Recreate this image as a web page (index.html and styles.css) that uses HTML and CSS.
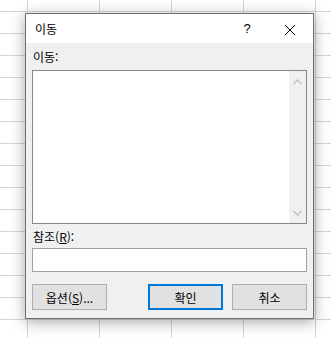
FILE: index.html
```html
<!DOCTYPE html>
<html lang="ko">
  <head>
    <meta charset="UTF-8" />
    <title>이동</title>
    <link rel="stylesheet" href="styles.css">
  </head>
  <body>
    <div class="dialog">
      <div class="titlebar">
        <span class="title">이동</span>
        <span class="help">?</span>
        <span class="close">
          <svg width="12" height="12" viewBox="0 0 12 12"><path d="M1 1 L11 11 M11 1 L1 11" stroke="#000" stroke-width="1" fill="none"/></svg>
        </span>
      </div>
      <div class="body">
        <div class="label">이동:</div>
        <div class="listbox">
          <div class="list-area"></div>
          <div class="scrollbar">
            <svg width="9" height="6" viewBox="0 0 9 6"><path d="M0.5 5 L4.5 1 L8.5 5" stroke="#c2c2c2" stroke-width="1.5" fill="none"/></svg>
            <svg width="9" height="6" viewBox="0 0 9 6"><path d="M0.5 1 L4.5 5 L8.5 1" stroke="#c2c2c2" stroke-width="1.5" fill="none"/></svg>
          </div>
        </div>
        <div class="label ref">참조(<u>R</u>):</div>
        <div class="textbox"></div>
        <div class="buttons">
          <button class="btn">옵션(<u>S</u>)...</button>
          <span class="spacer"></span>
          <button class="btn default">확인</button>
          <button class="btn">취소</button>
        </div>
      </div>
    </div>
  </body>
</html>
```
FILE: styles.css
```css
body {
  margin: 0;
  width: 331px;
  height: 338px;
  overflow: hidden;
  font-family: "Noto Sans CJK KR", "Noto Sans", sans-serif;
  font-size: 12px;
  color: #000;
  background-color: #fff;
  background-image:
    linear-gradient(to right, #d4d4d4 1px, transparent 1px),
    linear-gradient(to bottom, #d4d4d4 1px, transparent 1px);
  background-size: 72px 22px;
  background-position: 27px 11px;
  padding: 13px 0 0 25px;
  box-sizing: border-box;
}
.dialog {
  width: 289px;
  height: 306px;
  box-sizing: border-box;
  border: 1px solid #6f6f6f;
  background: #f0f0f0;
  box-shadow: 0 3px 14px rgba(0, 0, 0, 0.35);
  display: flex;
  flex-direction: column;
}
.titlebar {
  height: 30px;
  background: #fff;
  display: flex;
  align-items: center;
  padding-left: 9px;
}
.title {
  flex-grow: 1;
  margin-top: -1px;
}
.help {
  width: 14px;
  text-align: center;
  margin-right: 30px;
  font-family: "Liberation Sans", sans-serif;
  font-size: 13px;
}
.close {
  width: 12px;
  height: 12px;
  margin-right: 17px;
  margin-top: 2px;
}
.close svg {
  display: block;
}
.body {
  flex-grow: 1;
  padding: 6px 6px 8px 6px;
  display: flex;
  flex-direction: column;
}
.label {
  height: 16px;
  line-height: 16px;
  padding-left: 1px;
}
.listbox {
  margin-top: 5px;
  height: 154px;
  box-sizing: border-box;
  border: 1px solid #828790;
  background: #fff;
  display: flex;
}
.list-area {
  flex-grow: 1;
}
.scrollbar {
  width: 17px;
  background: #f0f0f0;
  display: flex;
  flex-direction: column;
  justify-content: space-between;
  align-items: center;
  padding: 8px 0 7px;
}
.scrollbar svg {
  display: block;
}
.ref {
  margin-top: 5px;
}
.textbox {
  margin-top: 3px;
  height: 24px;
  box-sizing: border-box;
  border: 1px solid #a0a0a0;
  background: #fff;
}
.buttons {
  margin-top: 12px;
  display: flex;
  gap: 9px;
}
.spacer {
  flex-grow: 1;
}
.btn {
  width: 75px;
  height: 26px;
  box-sizing: border-box;
  border: 1px solid #adadad;
  background: #e1e1e1;
  font-family: inherit;
  font-size: 12px;
  color: #000;
  padding: 0;
}
.btn.default {
  border: 2px solid #0078d7;
}
u {
  text-underline-offset: 1px;
}
```
